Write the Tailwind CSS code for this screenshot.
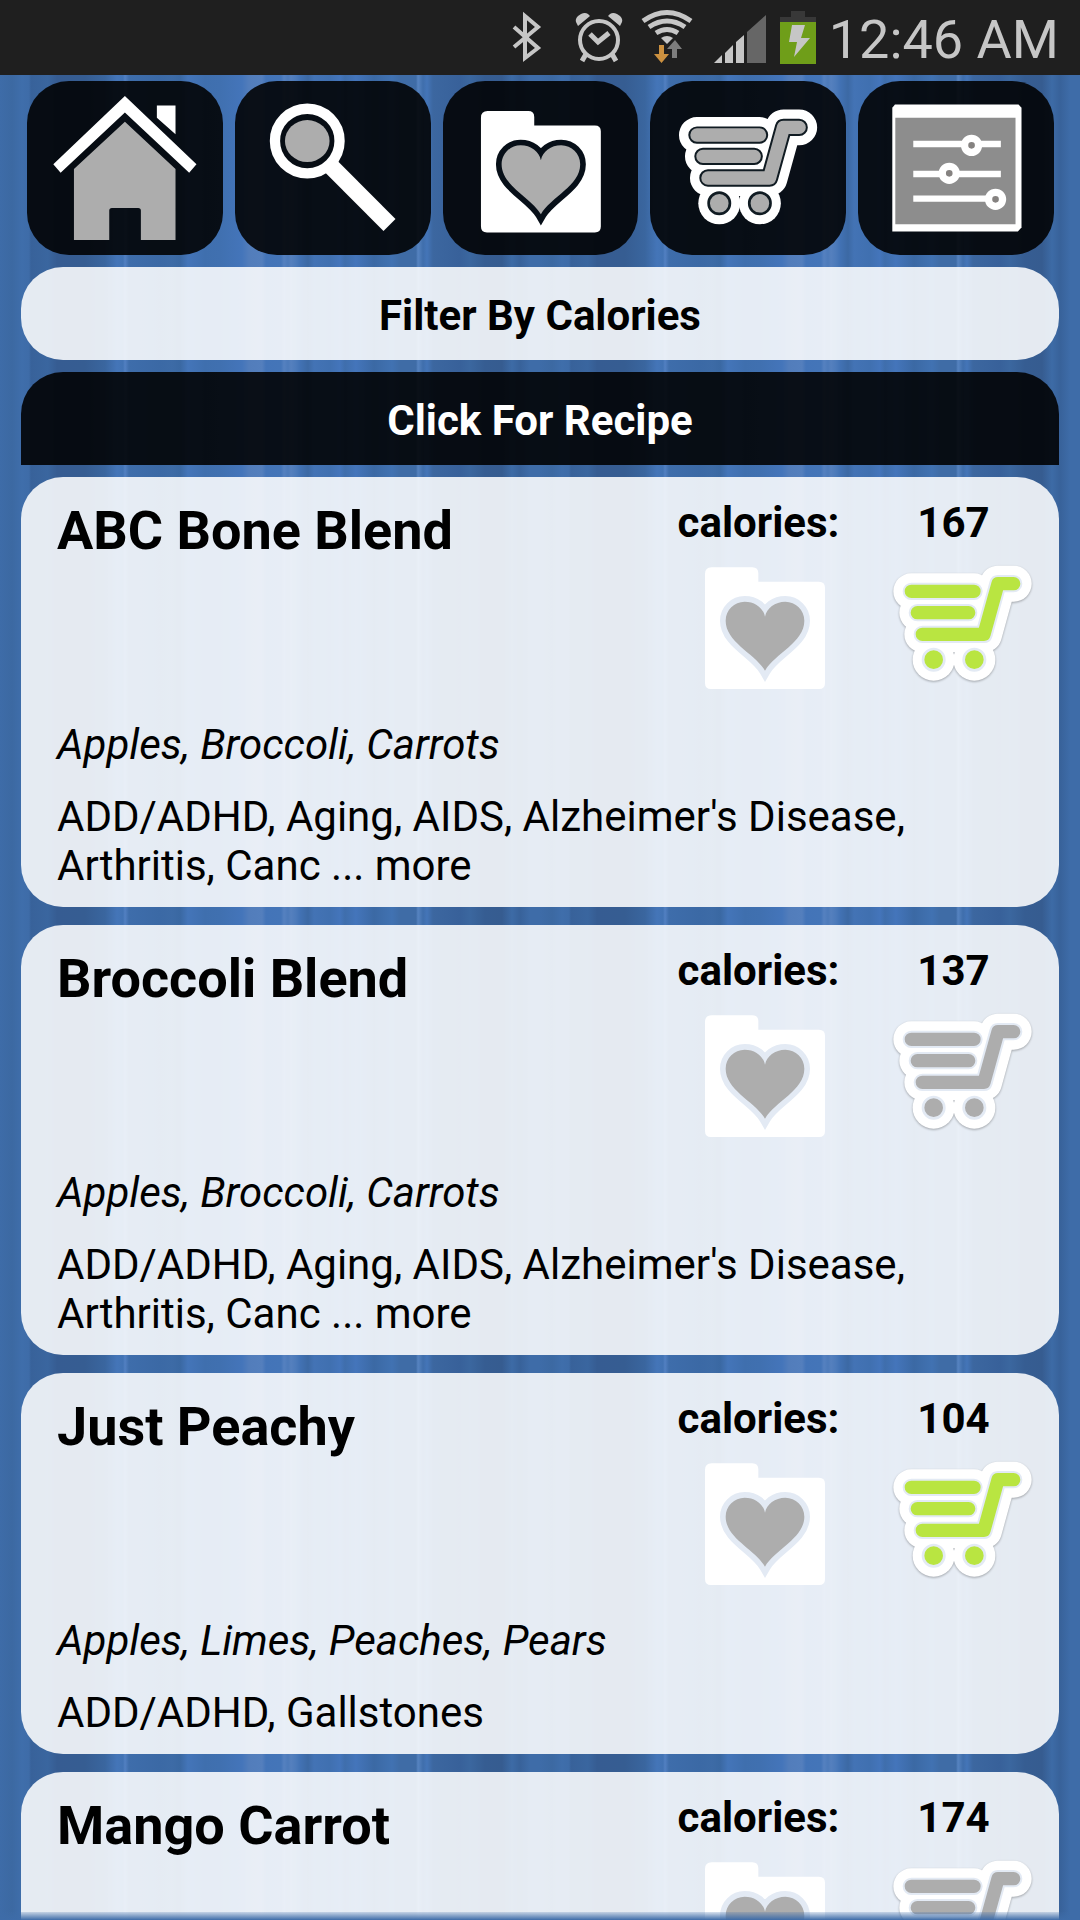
<!DOCTYPE html>
<html lang="en">
<head>
<meta charset="utf-8">
<meta name="viewport" content="width=device-width, initial-scale=1">
<title>Blends</title>
<script src="https://cdn.jsdelivr.net/npm/@tailwindcss/browser@4"></script>
</head>
<body class="relative flex h-screen flex-col overflow-hidden bg-[#3e6ca8] bg-[linear-gradient(90deg,#3e6ca8_0px,#3c69a2_12px,#3f6eab_22px,#3e6ca8_29px,#38629a_31px,#3a669f_48px,#365c92_57px,#365d92_85px,#3a669f_105px,#4475b8_117px,#4273b4_123px,#5280c2_125px,#3e6dab_129px,#3b69a5_160px,#3d6ba6_172px,#3a68a2_180px,#4475b9_188px,#3f6fae_205px,#4070b0_220px,#4475ba_242px,#527dbb_249px,#547fbd_262px,#4374b8_266px,#4475b8_281px,#5581c0_284px,#4c7aba_288px,#5580be_291px,#4c7aba_296px,#4272b4_300px,#3c69a4_308px,#4373b5_314px,#4070b0_330px,#4475bb_340px,#3f6eac_345px,#4475bb_356px,#3b69a4_374px,#4172b2_392px,#3f6ca6_400px,#3f6ca6_416px,#5683c0_418px,#3f6eac_423px,#4475b8_427px,#3c67a0_433px,#38619a_460px,#3b679f_470px,#365d92_485px,#365c90_502px,#3d6ba6_512px,#38629a_520px,#3e6ca8_530px,#3e6ca8_540px)] bg-[length:540px_100%] font-[Roboto,sans-serif] text-[42px] leading-[49px] text-black">

<!-- Shared icon shapes -->
<svg class="hidden" aria-hidden="true">
  <symbol id="cart" viewBox="0 0 414 350" overflow="visible">
    <g fill="none" stroke="#fff" stroke-linecap="round" stroke-linejoin="round" stroke-width="108">
      <path d="M54 77H242M72 141H226M87 206H272L314 54H361"/>
    </g>
    <g fill="#fff" stroke="none"><circle cx="121" cy="282" r="63"/><circle cx="243" cy="282" r="63"/></g>
    <path d="M54 77H242M72 141H226M87 206H272L314 54H361" fill="none" stroke-linecap="round" stroke-linejoin="round" stroke-width="52"/>
    <g fill="currentColor" stroke-width="8"><circle cx="121" cy="282" r="32"/><circle cx="243" cy="282" r="32"/></g>
    <path d="M54 77H242M72 141H226M87 206H272L314 54H361" fill="none" stroke="currentColor" stroke-linecap="round" stroke-linejoin="round" stroke-width="40"/>
  </symbol>
  <symbol id="folder" viewBox="0 0 360 366" overflow="visible">
    <path fill="#fff" stroke="none" d="M20 0H142Q160 0 160 18V43H342Q360 43 360 61V347Q360 365 342 365H18Q0 365 0 347V20Q0 0 20 0Z"/>
    <path stroke-width="34" d="M180 310C150 258 62 225 62 160C62 128 88 103 119 103C150 103 175 122 180 148C185 122 210 103 241 103C272 103 298 128 298 160C298 225 210 258 180 310Z"/>
    <path fill="currentColor" stroke="none" d="M180 310C150 258 62 225 62 160C62 128 88 103 119 103C150 103 175 122 180 148C185 122 210 103 241 103C272 103 298 128 298 160C298 225 210 258 180 310Z"/>
  </symbol>
</svg>

<!-- Status bar -->
<header class="flex h-[75px] shrink-0 items-center justify-end bg-[#1f1f1f] pr-[21px] text-[#c6c6c6]">
  <svg class="mr-8 h-[75px] w-8" viewBox="509 0 32 75" fill="none" stroke="currentColor" stroke-width="4" aria-hidden="true"><path d="M512 27L536 48L523 58V16L536 27L512 47"/></svg>
  <svg class="mr-4 h-[75px] w-[48px]" viewBox="573 0 48 75" fill="none" stroke="currentColor" aria-hidden="true">
    <circle cx="597" cy="40" r="19" stroke-width="4"/><path stroke-width="5" d="M588 34L596 42L607 33M584 54L580 61M610 54L614 61"/>
    <path fill="currentColor" stroke="none" d="M576 26L574 22Q573 19 576 16L579 14Q583 12 586 14L588 16ZM618 26L620 22Q621 19 618 16L615 14Q611 12 608 14L606 16Z"/>
  </svg>
  <svg class="mr-[18px] h-[75px] w-[56px]" viewBox="639 0 56 75" fill="none" stroke="currentColor" aria-hidden="true">
    <g stroke-width="5"><path d="M643 21Q667 4 691 21"/><path d="M649 27Q667 15 685 27"/><path d="M656 33Q667 26 678 33"/></g>
    <path fill="currentColor" stroke="none" d="M661 38Q667 34 673 38L667 44Z"/>
    <path fill="#cc9140" stroke="none" d="M659 45H664V54H669L661.500 63L654 54H659Z"/>
    <path fill="#7d7d7d" stroke="none" d="M672 58V49H667L675 40L682 49H677V58Z"/>
  </svg>
  <svg class="mr-3 h-[75px] w-[54px]" viewBox="711 0 54 75" fill="currentColor" aria-hidden="true">
    <path d="M712 63L720 55V63ZM723 63V53L731 45V63ZM734 63V42L742 35V63Z"/><path fill="#666" d="M745 63V32L764 15V63Z"/>
  </svg>
  <svg class="mr-3 h-[75px] w-[38px]" viewBox="778 0 38 75" aria-hidden="true">
    <path fill="#383838" d="M790 11H804V17H815V22H779V17H790Z"/><path fill="#6f9e19" d="M779 22H815V64H779Z"/>
    <path fill="currentColor" d="M791 25H804L800 38H809L793 57L796 42H788Z"/>
  </svg>
  <time class="pt-1 text-[54px] leading-[63px]">12:46 AM</time>
</header>

<!-- Main navigation -->
<nav class="grid shrink-0 grid-cols-5 gap-3 pr-[26px] pl-[27px] pt-1.5 text-[#adadad]">
  <a href="#" aria-label="Home" class="flex h-[174px] justify-center rounded-[42px] bg-black/88">
    <svg class="h-full w-full" viewBox="0 0 588 522" aria-hidden="true">
      <path fill="#fff" d="M294 45L79 250L101 275L294 94L487 275L509 250ZM390 73H446V160L390 110Z"/>
      <path fill="currentColor" d="M294 122L446 264V477H342V389Q342 381 334 381H255Q247 381 247 389V477H141V264Z"/>
    </svg>
  </a>
  <a href="#" aria-label="Search" class="flex h-[174px] justify-center rounded-[42px] bg-black/88">
    <svg class="h-full w-full" viewBox="0 0 588 522" aria-hidden="true">
      <path stroke="#fff" stroke-width="51" d="M285 253L464 432"/>
      <circle cx="217" cy="180" r="97" fill="#070d14" stroke="#fff" stroke-width="31"/>
      <ellipse cx="217" cy="180" rx="67" ry="63" fill="currentColor"/>
    </svg>
  </a>
  <a href="#" aria-label="Favorites" class="flex h-[174px] justify-center rounded-[42px] bg-black/88">
    <svg class="h-full w-full stroke-[#070f18]" viewBox="0 0 588 522" aria-hidden="true"><use href="#folder" x="114" y="90" width="360" height="366"/></svg>
  </a>
  <a href="#" aria-label="Shopping cart" class="flex h-[174px] justify-center rounded-[42px] bg-black/88">
    <svg class="h-full w-full stroke-[#101b22]" viewBox="0 0 588 522" aria-hidden="true"><use href="#cart" x="87" y="85" width="414" height="350"/></svg>
  </a>
  <a href="#" aria-label="Settings" class="flex h-[174px] justify-center rounded-[42px] bg-black/88">
    <svg class="h-full w-full" viewBox="0 0 588 522" aria-hidden="true">
      <path fill="#fff" d="M111 70H482L491 80V440L480 452H103V80Z"/><path fill="#8d8d8d" d="M112 110H473V430H112Z"/>
      <path stroke="#fff" stroke-width="19" d="M166 189H429M166 279H429M166 353H429"/>
      <g fill="#858280" stroke="#fff" stroke-width="22"><circle cx="341" cy="193" r="21"/><circle cx="274" cy="277" r="21"/><circle cx="413" cy="355" r="21"/></g>
    </svg>
  </a>
</nav>

<main class="flex shrink-0 flex-col px-[21px] pt-3">
  <button type="button" class="rounded-[42px] bg-white/87 pt-6 pb-5 font-bold">Filter By Calories</button>
  <h1 class="mt-3 rounded-t-[42px] bg-black/88 pt-6 pb-5 text-center font-bold text-white">Click For Recipe</h1>

  <div class="mt-3 flex flex-col gap-[18px]">
    <article class="rounded-[42px] bg-white/87 pt-[21px] pb-[17px]">
      <div class="flex justify-between pr-2 pl-9">
        <h2 class="pt-px text-[54px] leading-[63px] font-bold"><a href="#">ABC Bone Blend</a></h2>
        <div class="grid grid-cols-[195px_195px] text-center font-bold">
          <span>calories:</span><span>167</span>
          <button type="button" aria-label="Add to favorites" class="text-[#adadad]"><svg class="h-[150px] w-[195px] stroke-[#e3eaf4]" viewBox="0 0 585 450"><use href="#folder" x="132" y="61" width="360" height="366"/></svg></button>
          <button type="button" aria-label="Remove from cart" class="text-[#b9e541]"><svg class="h-[150px] w-[195px] stroke-[#e3eaf4] drop-shadow-[0_1px_1px_rgba(0,0,0,0.3)]" viewBox="0 0 585 450"><use href="#cart" x="112" y="56" width="414" height="350"/></svg></button>
        </div>
      </div>
      <p class="mt-[23px] px-9 italic">Apples, Broccoli, Carrots</p>
      <p class="mt-[23px] px-9">ADD/ADHD, Aging, AIDS, Alzheimer's Disease, Arthritis, Canc ... more</p>
    </article>

    <article class="rounded-[42px] bg-white/87 pt-[21px] pb-[17px]">
      <div class="flex justify-between pr-2 pl-9">
        <h2 class="pt-px text-[54px] leading-[63px] font-bold"><a href="#">Broccoli Blend</a></h2>
        <div class="grid grid-cols-[195px_195px] text-center font-bold">
          <span>calories:</span><span>137</span>
          <button type="button" aria-label="Add to favorites" class="text-[#adadad]"><svg class="h-[150px] w-[195px] stroke-[#e3eaf4]" viewBox="0 0 585 450"><use href="#folder" x="132" y="61" width="360" height="366"/></svg></button>
          <button type="button" aria-label="Add to cart" class="text-[#adadad]"><svg class="h-[150px] w-[195px] stroke-[#e3eaf4] drop-shadow-[0_1px_1px_rgba(0,0,0,0.3)]" viewBox="0 0 585 450"><use href="#cart" x="112" y="56" width="414" height="350"/></svg></button>
        </div>
      </div>
      <p class="mt-[23px] px-9 italic">Apples, Broccoli, Carrots</p>
      <p class="mt-[23px] px-9">ADD/ADHD, Aging, AIDS, Alzheimer's Disease, Arthritis, Canc ... more</p>
    </article>

    <article class="rounded-[42px] bg-white/87 pt-[21px] pb-[17px]">
      <div class="flex justify-between pr-2 pl-9">
        <h2 class="pt-px text-[54px] leading-[63px] font-bold"><a href="#">Just Peachy</a></h2>
        <div class="grid grid-cols-[195px_195px] text-center font-bold">
          <span>calories:</span><span>104</span>
          <button type="button" aria-label="Add to favorites" class="text-[#adadad]"><svg class="h-[150px] w-[195px] stroke-[#e3eaf4]" viewBox="0 0 585 450"><use href="#folder" x="132" y="61" width="360" height="366"/></svg></button>
          <button type="button" aria-label="Remove from cart" class="text-[#b9e541]"><svg class="h-[150px] w-[195px] stroke-[#e3eaf4] drop-shadow-[0_1px_1px_rgba(0,0,0,0.3)]" viewBox="0 0 585 450"><use href="#cart" x="112" y="56" width="414" height="350"/></svg></button>
        </div>
      </div>
      <p class="mt-[23px] px-9 italic">Apples, Limes, Peaches, Pears</p>
      <p class="mt-[23px] px-9">ADD/ADHD, Gallstones</p>
    </article>

    <article class="rounded-t-[42px] bg-white/87 pt-[21px] pb-[17px]">
      <div class="flex justify-between pr-2 pl-9">
        <h2 class="pt-px text-[54px] leading-[63px] font-bold"><a href="#">Mango Carrot</a></h2>
        <div class="grid grid-cols-[195px_195px] text-center font-bold">
          <span>calories:</span><span>174</span>
          <button type="button" aria-label="Add to favorites" class="text-[#adadad]"><svg class="h-[150px] w-[195px] stroke-[#e3eaf4]" viewBox="0 0 585 450"><use href="#folder" x="132" y="61" width="360" height="366"/></svg></button>
          <button type="button" aria-label="Add to cart" class="text-[#adadad]"><svg class="h-[150px] w-[195px] stroke-[#e3eaf4] drop-shadow-[0_1px_1px_rgba(0,0,0,0.3)]" viewBox="0 0 585 450"><use href="#cart" x="112" y="56" width="414" height="350"/></svg></button>
        </div>
      </div>
    </article>
  </div>
</main>

<!-- Scroll edge fade -->
<div class="absolute inset-x-0 bottom-0 h-2 bg-linear-to-b from-[#3e6ca8]/20 to-[#3e6ca8]"></div>
</body>
</html>
